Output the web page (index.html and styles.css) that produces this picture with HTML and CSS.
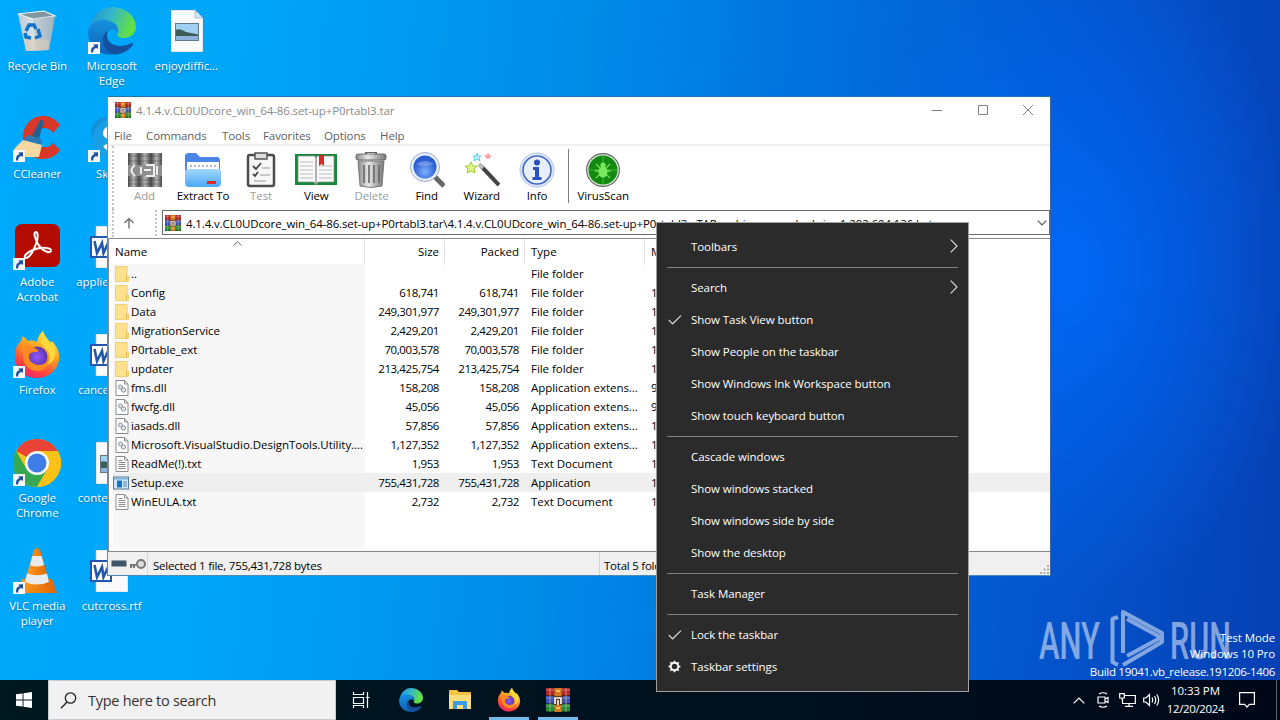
FILE: index.html
```html
<!DOCTYPE html>
<html lang="en">
<head>
    <meta charset="utf-8" />
    <title>Desktop</title>
    <link rel="stylesheet" href="styles.css">
</head>
<body>
    <!-- shared icons -->
    <svg class="sprite" width="0" height="0">
        <defs>
            <linearGradient id="g-edge" x1="0" y1="0" x2="1" y2="0.3"><stop offset="0" stop-color="#1b8fd8"/><stop offset="0.5" stop-color="#35b8c8"/><stop offset="1" stop-color="#62e045"/></linearGradient>
            <linearGradient id="g-edge2" x1="0" y1="0" x2="0" y2="1"><stop offset="0" stop-color="#1591df"/><stop offset="1" stop-color="#0d62b8"/></linearGradient>
            <linearGradient id="g-fox" x1="0.8" y1="0" x2="0.3" y2="1"><stop offset="0" stop-color="#fff14a"/><stop offset="0.45" stop-color="#ff9a1f"/><stop offset="0.8" stop-color="#ff4040"/><stop offset="1" stop-color="#e8226d"/></linearGradient>
            <radialGradient id="g-globe"><stop offset="0" stop-color="#9059ff"/><stop offset="1" stop-color="#5a35b0"/></radialGradient>
            <linearGradient id="g-folder" x1="0" y1="0" x2="0" y2="1"><stop offset="0" stop-color="#a4d8ff"/><stop offset="1" stop-color="#4aa8f6"/></linearGradient>
            <linearGradient id="g-metal" x1="0" y1="0" x2="1" y2="0"><stop offset="0" stop-color="#8a8a8a"/><stop offset="0.4" stop-color="#e8e8e8"/><stop offset="1" stop-color="#777"/></linearGradient>
            <linearGradient id="g-strap" x1="0" y1="0" x2="1" y2="0"><stop offset="0" stop-color="#4a4a4a"/><stop offset="0.5" stop-color="#b4b4b4"/><stop offset="1" stop-color="#4a4a4a"/></linearGradient>
            <radialGradient id="g-lens" cx="0.5" cy="0.7"><stop offset="0" stop-color="#7fb2ff"/><stop offset="1" stop-color="#2b5fd0"/></radialGradient>
            <linearGradient id="g-bin" x1="0" y1="0" x2="1" y2="0"><stop offset="0" stop-color="#b9c9d4"/><stop offset="0.5" stop-color="#dfe7ec"/><stop offset="1" stop-color="#8fa6b5"/></linearGradient>
            <linearGradient id="g-cone" x1="0" y1="0" x2="1" y2="0"><stop offset="0" stop-color="#ffa022"/><stop offset="1" stop-color="#e06400"/></linearGradient>
        </defs>

        <symbol id="shortcut" viewBox="0 0 12 12">
            <rect width="12" height="12" fill="#f4f6f8"/>
            <path d="M3.2 10.500C2.6 7 4 4.700 6.600 4.300L5.200 2.600 10 2.200 9.900 7 8.400 5.900C6 6.400 5 8 5.200 10.500z" fill="#1e4f9c"/>
        </symbol>

        <symbol id="edge" viewBox="0 0 48 48">
            <path d="M2 22A22.500 22.500 0 0 1 24 0C37 0 48 9 48 20C48 27 42 31 36 31C31 31 29 29 29.500 27C31 25 31 22 29 19C25 13 10 12 2 22Z" fill="url(#g-edge)"/>
            <path d="M0 24C3 13 14 11 22 14C28 16 31 21 29.500 26C28 21 20 21 18 28C15 38 24 46 31 46.500C14 51 0 41 0 24Z" fill="url(#g-edge2)"/>
            <path d="M20 24C17 31 21 38 31 39C37 39 41 37 44 36C46 36 45 38 44 39C39 45 33 47 28 47.500C18 46 12 36 16 28Q17 25 20 24Z" fill="#15509e"/>
        </symbol>

        <symbol id="firefox" viewBox="0 0 48 48">
            <path d="M7 11C9 9 9 7 9.500 5C13 7 14 9 15 10C19 9 22 10 24 11C25 7 26 3 30 0C31 5 35 8 38 12L39 10C45 16 47 23 46 29C44 40 35 47 24 47C11 47 1 37 2 24C2 18 4 14 7 11Z" fill="url(#g-fox)"/>
            <circle cx="24" cy="26" r="10.500" fill="url(#g-globe)"/>
            <path d="M7 16C12 12 21 15 26 20C23 22 18 20 16 24C15 29 19 33 25 34C31 34 35 31 35 26C38 34 31 41 23 40C14 39 9 31 10 23C8 21 7 18 7 16Z" fill="#ff8a22"/>
            <path d="M30 0C26 6 27 13 32 17C38 21 38 29 34 34C43 31 45 20 39 10L38 12C35 8 31 5 30 0Z" fill="#ffd83a"/>
        </symbol>

        <symbol id="winrar" viewBox="0 0 24 24">
            <rect x="0" y="0" width="24" height="8" fill="#b3262e"/>
            <rect x="0" y="8" width="24" height="8" fill="#3b52c4"/>
            <rect x="0" y="16" width="24" height="8" fill="#1f8a3c"/>
            <path d="M0 2h24M0 10h24M0 18h24" stroke="#fff" stroke-opacity=".35" stroke-width="1"/>
            <path d="M0 7.500h24M0 15.500h24M0 23.500h24" stroke="#111" stroke-opacity=".6" stroke-width="1"/>
            <path d="M4 0v24M20 0v24" stroke="#d8b04a" stroke-width="1" stroke-opacity=".8"/>
            <rect x="8.500" y="0" width="7" height="24" fill="#d07a22"/>
            <rect x="7.500" y="8" width="9" height="9" fill="#5a3a1c"/>
            <path d="M9 16v-6h6v6M12 12v5" fill="none" stroke="#fff" stroke-width="1.600"/>
            <path d="M10 3h4M10 20h4" stroke="#ffd75a" stroke-width="1.600"/>
        </symbol>

        <symbol id="image-file" viewBox="0 0 32 42">
            <path d="M0 0H24L32 8V42H0Z" fill="#fafafa" stroke="#b8c4cc" stroke-width=".6"/>
            <path d="M24 0V8H32Z" fill="#cfe4f4" stroke="#8fa9bb" stroke-width=".6"/>
            <rect x="4.500" y="13.500" width="23" height="17" fill="#9fd0ef" stroke="#607888"/>
            <path d="M5 20Q9 18 15 22L27 24.500V27H5Z" fill="#3d5b57"/>
            <path d="M5 26H27V30H5Z" fill="#8fb3d8"/>
        </symbol>

        <symbol id="word-file" viewBox="0 0 38 42">
            <path d="M6 0H38V42H6Z" fill="#fafafa" stroke="#b8c4cc" stroke-width=".6"/>
            <rect x="1" y="11" width="20" height="20" fill="#fff" stroke="#2356ad" stroke-width="2"/>
            <path d="M4.500 15L7 27L12 17L13.500 27L19 15" fill="none" stroke="#2356ad" stroke-width="2.600"/>
        </symbol>

        <symbol id="folder" viewBox="0 0 14 16">
            <path d="M.5.500H12V10H13.500V15.500H.5Z" fill="#ffe08c" stroke="#f0cf70"/>
            <path d="M11.500 10V15" stroke="#dfb54c"/>
        </symbol>
        <symbol id="dll" viewBox="0 0 13 16">
            <path d="M.5.500H9L12.500 4V15.500H.5Z" fill="#fff" stroke="#8c8c8c"/>
            <path d="M9 .5V4H12.500" fill="none" stroke="#8c8c8c"/>
            <circle cx="5" cy="7" r="2" fill="#dfe5ea" stroke="#8c969e"/>
            <circle cx="8" cy="10" r="2.200" fill="#dfe5ea" stroke="#8c969e"/>
        </symbol>
        <symbol id="txt" viewBox="0 0 13 16">
            <path d="M.5.500H9L12.500 4V15.500H.5Z" fill="#fff" stroke="#8c8c8c"/>
            <path d="M9 .5V4H12.500M3 4.500H7M3 6.500H10M3 8.500H10M3 10.500H10M3 12.500H10" fill="none" stroke="#8c8c8c"/>
        </symbol>
        <symbol id="exe" viewBox="0 0 16 13">
            <rect x=".5" y=".5" width="15" height="12" fill="#cfe6f6" stroke="#5d7c92"/>
            <rect x="1" y="1" width="14" height="2" fill="#7fb4dc"/>
            <rect x="4" y="4" width="5" height="7" fill="#1673cc"/>
            <path d="M10 5.500H14M10 7.500H14M10 9.500H14" stroke="#4c88b8"/>
        </symbol>
        <symbol id="arrow" viewBox="0 0 8 14">
            <path d="M.7.700L7 7L.7 13.300" fill="none" stroke="#e0e0e0" stroke-width="1.100"/>
        </symbol>
        <symbol id="check" viewBox="0 0 14 10">
            <path d="M.8 5L4.600 8.800L13 .6" fill="none" stroke="#d8d8d8" stroke-width="1.200"/>
        </symbol>
    </svg>

    <div class="desktop">
        <div class="icons">
            <div class="icon">
                <svg class="pic" viewBox="0 0 48 48">
                    <path d="M5 7L13 44L36 43L42 9L31 4Z" fill="url(#g-bin)"/>
                    <path d="M5 7L31 4L42 9L20 12Z" fill="#8196a3" stroke="#eef4f7" stroke-width="1.200"/>
                    <path d="M20 12L23 44L36 43L42 9Z" fill="#a9bac6" fill-opacity=".6"/>
                    <path d="M12 33L22 32L36 34L35 43L13 44Z" fill="#dcc8b8" fill-opacity=".6"/>
                    <path d="M13 24L16 18L21 18L23 22M25 22L27 29L22 31M18 31L13 30L12 26" fill="none" stroke="#1273c8" stroke-width="3.500"/>
                </svg>
                <span>Recycle Bin</span>
            </div>
            <div class="icon">
                <svg class="pic" viewBox="0 0 48 48">
                    <path d="M47 10C42 3 36 1 30 1C18 1 10 11 10 23C10 36 19 44 29 44C37 44 43 41 47 35L40 28C37 32 34 33 30 32C25 32 22 28 22 23C22 17 26 13 31 13C35 13 38 15 40 18Z" fill="#d8382a"/>
                    <path d="M27 5L31 6L26 24L19 21Z" fill="#23608f"/>
                    <path d="M15 20L28 24L29 30L10 26Z" fill="#2a7ab8"/>
                    <path d="M10 25L29 30L26 42L8 42L1 34Z" fill="#f5d9a0"/>
                </svg>
                <svg class="shortcut"><use href="#shortcut"/></svg>
                <span>CCleaner</span>
            </div>
            <div class="icon">
                <svg class="pic" viewBox="0 0 48 48">
                    <rect x="2" y="1" width="45" height="43" rx="7" fill="#b30b00"/>
                    <path d="M23 9C20 9 22 16 25 21C29 28 37 31 38 28C39 24 27 24 20 27C12 30 10 35 13 35C17 35 22 25 24 18C25 13 25 9 23 9Z" fill="none" stroke="#fff" stroke-width="2"/>
                </svg>
                <svg class="shortcut"><use href="#shortcut"/></svg>
                <span>Adobe Acrobat</span>
            </div>
            <div class="icon">
                <svg class="pic"><use href="#firefox"/></svg>
                <svg class="shortcut"><use href="#shortcut"/></svg>
                <span>Firefox</span>
            </div>
            <div class="icon">
                <svg class="pic" viewBox="0 0 48 48">
                    <circle cx="24" cy="24" r="24" fill="#fbc116"/>
                    <path d="M24 24L3.200 12A24 24 0 0 1 44.800 12H24Z" fill="#ea4335"/>
                    <path d="M3.200 12A24 24 0 0 0 24 48L34.400 30L24 24L13.600 30Z" fill="#34a853"/>
                    <path d="M24 12H44.800A24 24 0 0 1 24 48L34.400 30Z" fill="#fbc116"/>
                    <circle cx="24" cy="24" r="12" fill="#fff"/>
                    <circle cx="24" cy="24" r="9.500" fill="#3f7ee8"/>
                </svg>
                <svg class="shortcut"><use href="#shortcut"/></svg>
                <span>Google Chrome</span>
            </div>
            <div class="icon">
                <svg class="pic" viewBox="0 0 48 48">
                    <path d="M9 32H39L44 46H4Z" fill="url(#g-cone)"/>
                    <path d="M21 3Q24 -1 27 3L37 37Q24 43 11 37Z" fill="url(#g-cone)"/>
                    <path d="M19.300 9L28.700 9L31 18Q24 21 17 18Z" fill="#e8eaec"/>
                    <path d="M14 26.500Q24 30 34 26.500L36 35Q24 40 12 35Z" fill="#e8eaec"/>
                </svg>
                <svg class="shortcut"><use href="#shortcut"/></svg>
                <span>VLC media player</span>
            </div>
            <div class="icon">
                <svg class="pic"><use href="#edge"/></svg>
                <svg class="shortcut"><use href="#shortcut"/></svg>
                <span>Microsoft Edge</span>
            </div>
            <div class="icon">
                <svg class="pic" viewBox="0 0 48 48">
                    <circle cx="18" cy="17" r="15" fill="#1392dc"/>
                    <circle cx="25" cy="24" r="20" fill="#1a9fe6"/>
                    <path d="M31 16C26 10 16 13 17 19C18 25 31 22 31 29C30 35 20 36 17 30" fill="none" stroke="#fff" stroke-width="4"/>
                </svg>
                <svg class="shortcut"><use href="#shortcut"/></svg>
                <span>Skype</span>
            </div>
            <div class="icon">
                <svg class="pic word"><use href="#word-file"/></svg>
                <span>appliedcom...</span>
            </div>
            <div class="icon">
                <svg class="pic word"><use href="#word-file"/></svg>
                <span>cancelred.rtf</span>
            </div>
            <div class="icon">
                <svg class="pic image"><use href="#image-file"/></svg>
                <span>contentrep...</span>
            </div>
            <div class="icon">
                <svg class="pic word"><use href="#word-file"/></svg>
                <span>cutcross.rtf</span>
            </div>
            <div class="icon">
                <svg class="pic image"><use href="#image-file"/></svg>
                <span>enjoydiffic...</span>
            </div>
        </div>

        <svg class="brand" viewBox="0 0 194 60">
            <g fill="#fff" font-family="Roboto" font-size="51" font-weight="500">
                <text x="0" y="50.500" textLength="61" lengthAdjust="spacingAndGlyphs">ANY</text>
                <text x="131" y="50.500" textLength="61" lengthAdjust="spacingAndGlyphs">RUN</text>
            </g>
            <path d="M79 9L73.500 11V54L79 57M84 45V4L123 25V30L88 11M88 48L123 29M84 57L123 34V29" fill="none" stroke="#fff" stroke-width="4" stroke-linejoin="round"/>
        </svg>
        <div class="build">
            <div>Test Mode</div>
            <div>Windows 10 Pro</div>
            <div class="last">Build 19041.vb_release.191206-1406</div>
        </div>
    </div>

    <div class="window">
        <div class="titlebar">
            <svg class="app"><use href="#winrar"/></svg>
            <span class="title">4.1.4.v.CL0UDcore_win_64-86.set-up+P0rtabl3.tar</span>
            <svg class="controls" viewBox="0 0 104 12">
                <path d="M1 6.500H11M47.500 1.500H56.500V10.500H47.500ZM92 1L102 11M102 1L92 11" fill="none" stroke="#808080"/>
            </svg>
        </div>
        <div class="menubar">
            <span class="m1">File</span><span class="m2">Commands</span><span class="m3">Tools</span><span class="m4">Favorites</span><span class="m5">Options</span><span class="m6">Help</span>
        </div>
        <div class="toolbar">
            <div class="tool add off">
                <svg viewBox="0 0 36 36">
                    <rect x="1" y="1" width="11" height="34" fill="url(#g-strap)"/>
                    <rect x="12" y="1" width="12" height="34" fill="url(#g-strap)"/>
                    <rect x="24" y="1" width="11" height="34" fill="url(#g-strap)"/>
                    <path d="M1 4H35M1 9H35M1 28H35M1 32H35" stroke="#333" stroke-opacity=".35"/>
                    <rect x="1" y="13" width="34" height="11" fill="#8e8e8e"/>
                    <path d="M8 13Q1 18 8 24M14 15V22M17 18H24M19 13H27V24H19M30 14V23" fill="none" stroke="#eee" stroke-width="2"/>
                </svg>
                <span>Add</span>
            </div>
            <div class="tool extract">
                <svg viewBox="0 0 36 36">
                    <path d="M0 4Q0 1 4 1H11L15 5H32Q35 5 35 9V30H0Z" fill="#4a86ea"/>
                    <rect x="2" y="10" width="32" height="14" fill="#fff"/>
                    <path d="M5 14H31" stroke="#b0b8c4" stroke-width="2" stroke-dasharray="2 2"/>
                    <path d="M0 20Q0 17 4 17H32Q36 17 36 20V31Q36 35 32 35H4Q0 35 0 31Z" fill="url(#g-folder)"/>
                    <rect x="22" y="29" width="9" height="3" fill="#e02828"/>
                </svg>
                <span>Extract To</span>
            </div>
            <div class="tool off">
                <svg viewBox="0 0 36 36">
                    <rect x="5" y="3" width="26" height="31" rx="2" fill="#f6f6f6" stroke="#4c4c4c" stroke-width="2.500"/>
                    <path d="M12 1H24V7H12Z" fill="#ddd" stroke="#555" stroke-width="1.500"/>
                    <path d="M10 14L13 17L18 11M10 22L12 24L15 20" fill="none" stroke="#444" stroke-width="1.800"/>
                    <path d="M19 16H27M17 23H27M11 29H23" stroke="#999" stroke-width="1.200"/>
                </svg>
                <span>Test</span>
            </div>
            <div class="tool">
                <svg class="wide" viewBox="0 0 42 36">
                    <rect x="0" y="2" width="42" height="31" fill="#168a38"/>
                    <path d="M3 4H20L21 6L22 4H39V30H23L21 33L19 30H3Z" fill="#fafafa" stroke="#8a8a8a" stroke-width=".7"/>
                    <path d="M5 10H18M5 14H18M5 18H18M5 22H18M5 26H18M24 14H37M24 18H37M24 22H37M24 26H37" stroke="#bbb"/>
                    <path d="M21 5V32" stroke="#666"/>
                    <path d="M24 3H29V14L26.500 12L24 14Z" fill="#d52b2b"/>
                </svg>
                <span>View</span>
            </div>
            <div class="tool off">
                <svg viewBox="0 0 36 36">
                    <path d="M13 3V0H23V3" fill="none" stroke="#666" stroke-width="2"/>
                    <rect x="3" y="2" width="30" height="6" rx="2" fill="url(#g-metal)" stroke="#555" stroke-width=".8"/>
                    <path d="M5 9H31L29 34Q18 37 7 34Z" fill="url(#g-metal)" stroke="#666" stroke-width=".8"/>
                    <path d="M11 13V31M16 13V31M21 13V31M26 13V31" stroke="#666" stroke-width="1.600"/>
                </svg>
                <span>Delete</span>
            </div>
            <div class="tool">
                <svg viewBox="0 0 36 36">
                    <path d="M26 25L35 34" stroke="#666" stroke-width="5"/>
                    <circle cx="16" cy="15" r="14.500" fill="#e8eef8" stroke="#9caecb"/>
                    <circle cx="16" cy="15" r="11.500" fill="url(#g-lens)"/>
                    <path d="M7 12Q16 6 25 12Q16 16 7 12Z" fill="#fff" fill-opacity=".25"/>
                </svg>
                <span>Find</span>
            </div>
            <div class="tool">
                <svg viewBox="0 0 36 36">
                    <path d="M17 14L35 33" stroke="#444" stroke-width="4"/>
                    <path d="M15 12L19 16" stroke="#bbb" stroke-width="4"/>
                    <path d="M7 10L9 14L13 14L10 17L11 21L7 19L3 21L4 17L1 14L5 14Z" fill="#dff58a" stroke="#9ccc2c"/>
                    <path d="M13 1L14 4L17 4L15 6L16 9L13 7L10 9L11 6L9 4L12 4Z" fill="#c4f1ff" stroke="#60cdea"/>
                    <path d="M24 0L25 3L28 3L26 5L26 7L24 6L22 7L22 5L20 3L23 3Z" fill="#ff9c9c"/>
                </svg>
                <span>Wizard</span>
            </div>
            <div class="tool">
                <svg viewBox="0 0 36 36">
                    <circle cx="18" cy="18" r="17" fill="#dbe6fa" stroke="#b5c6e8"/>
                    <circle cx="18" cy="18" r="14" fill="#e8eefa" stroke="#4468c4" stroke-width="1.600"/>
                    <circle cx="18" cy="10.500" r="3" fill="#2c50c4"/>
                    <path d="M14 15H20V25H22.500V28H13.500V25H16V18H14Z" fill="#2c50c4"/>
                </svg>
                <span>Info</span>
            </div>
            <div class="divider"></div>
            <div class="tool">
                <svg viewBox="0 0 36 36">
                    <circle cx="18" cy="18" r="17" fill="#666"/>
                    <circle cx="18" cy="18" r="15.800" fill="#d4e8d0"/>
                    <circle cx="18" cy="18" r="14.500" fill="#128a12"/>
                    <path d="M18 4V32M4 18H32" stroke="#3fb630"/>
                    <path d="M11 12L25 26M25 12L11 26M10 19H26" stroke="#6fe052" stroke-width="1.300"/>
                    <ellipse cx="18" cy="20" rx="4.500" ry="5.500" fill="#7be85c"/>
                    <circle cx="18" cy="13" r="2.600" fill="#7be85c"/>
                </svg>
                <span>VirusScan</span>
            </div>
        </div>
        <div class="addressbar">
            <svg class="up" viewBox="0 0 12 12"><path d="M6 11.500V1.500M1.500 6L6 1.500L10.500 6" fill="none" stroke="#777" stroke-width="1.500"/></svg>
            <div class="grip"></div>
            <div class="address">
                <svg class="app"><use href="#winrar"/></svg>
                <span>4.1.4.v.CL0UDcore_win_64-86.set-up+P0rtabl3.tar\4.1.4.v.CL0UDcore_win_64-86.set-up+P0rtabl3 - TAR archive, unpacked size 1,292,604,136 bytes</span>
                <svg class="drop" viewBox="0 0 10 6"><path d="M.7.700L5 5L9.300.7" fill="none" stroke="#555" stroke-width="1.200"/></svg>
            </div>
        </div>
        <div class="list">
            <div class="row head">
                <span class="name">Name</span><span class="num">Size</span><span class="num">Packed</span><span class="type">Type</span><span class="date">Modified</span>
                <svg class="sort" viewBox="0 0 9 5"><path d="M.5 4.500L4.500.7L8.500 4.500" fill="none" stroke="#666"/></svg>
            </div>
            <div class="row"><span class="name"><svg class="fi"><use href="#folder"/></svg>..</span><span class="num"></span><span class="num"></span><span class="type">File folder</span><span class="date"></span></div>
            <div class="row"><span class="name"><svg class="fi"><use href="#folder"/></svg>Config</span><span class="num">618,741</span><span class="num">618,741</span><span class="type">File folder</span><span class="date">12/20/2024</span></div>
            <div class="row"><span class="name"><svg class="fi"><use href="#folder"/></svg>Data</span><span class="num">249,301,977</span><span class="num">249,301,977</span><span class="type">File folder</span><span class="date">12/20/2024</span></div>
            <div class="row"><span class="name"><svg class="fi"><use href="#folder"/></svg>MigrationService</span><span class="num">2,429,201</span><span class="num">2,429,201</span><span class="type">File folder</span><span class="date">12/20/2024</span></div>
            <div class="row"><span class="name"><svg class="fi"><use href="#folder"/></svg>P0rtable_ext</span><span class="num">70,003,578</span><span class="num">70,003,578</span><span class="type">File folder</span><span class="date">12/20/2024</span></div>
            <div class="row"><span class="name"><svg class="fi"><use href="#folder"/></svg>updater</span><span class="num">213,425,754</span><span class="num">213,425,754</span><span class="type">File folder</span><span class="date">12/20/2024</span></div>
            <div class="row"><span class="name"><svg class="fi"><use href="#dll"/></svg>fms.dll</span><span class="num">158,208</span><span class="num">158,208</span><span class="type">Application extens...</span><span class="date">9/15/2024</span></div>
            <div class="row"><span class="name"><svg class="fi"><use href="#dll"/></svg>fwcfg.dll</span><span class="num">45,056</span><span class="num">45,056</span><span class="type">Application extens...</span><span class="date">9/15/2024</span></div>
            <div class="row"><span class="name"><svg class="fi"><use href="#dll"/></svg>iasads.dll</span><span class="num">57,856</span><span class="num">57,856</span><span class="type">Application extens...</span><span class="date">12/7/2024</span></div>
            <div class="row"><span class="name"><svg class="fi"><use href="#dll"/></svg>Microsoft.VisualStudio.DesignTools.Utility....</span><span class="num">1,127,352</span><span class="num">1,127,352</span><span class="type">Application extens...</span><span class="date">12/7/2024</span></div>
            <div class="row"><span class="name"><svg class="fi"><use href="#txt"/></svg>ReadMe(!).txt</span><span class="num">1,953</span><span class="num">1,953</span><span class="type">Text Document</span><span class="date">12/20/2024</span></div>
            <div class="row selected"><span class="name"><svg class="fi exe"><use href="#exe"/></svg>Setup.exe</span><span class="num">755,431,728</span><span class="num">755,431,728</span><span class="type">Application</span><span class="date">12/20/2024</span></div>
            <div class="row"><span class="name"><svg class="fi"><use href="#txt"/></svg>WinEULA.txt</span><span class="num">2,732</span><span class="num">2,732</span><span class="type">Text Document</span><span class="date">12/20/2024</span></div>
            <div class="row rest"><span class="name"></span></div>
        </div>
        <div class="statusbar">
            <svg class="keys" viewBox="0 0 36 12">
                <rect x=".5" y="2.500" width="15" height="6" rx="1" fill="#3f5568" stroke="#8fa0ac"/>
                <path d="M19 7H29M20 7V10M23 7V10" stroke="#777" stroke-width="2"/>
                <circle cx="30" cy="6" r="4" fill="#ddd" stroke="#777" stroke-width="2"/>
            </svg>
            <span class="left">Selected 1 file, 755,431,728 bytes</span>
            <span class="right">Total 5 folders, 7 files, 756,824,885 bytes</span>
            <svg class="resize" viewBox="0 0 9 9"><path d="M7 0h2v2H7zM7 3.500h2v2H7zM7 7h2v2H7zM3.500 3.500h2v2h-2zM3.500 7h2v2h-2zM0 7h2v2H0z" fill="#aaa"/></svg>
        </div>
    </div>

    <div class="context-menu">
        <div class="item"><span>Toolbars</span><svg class="arrow"><use href="#arrow"/></svg></div>
        <hr>
        <div class="item"><span>Search</span><svg class="arrow"><use href="#arrow"/></svg></div>
        <div class="item"><svg class="check"><use href="#check"/></svg><span>Show Task View button</span></div>
        <div class="item"><span>Show People on the taskbar</span></div>
        <div class="item"><span>Show Windows Ink Workspace button</span></div>
        <div class="item"><span>Show touch keyboard button</span></div>
        <hr>
        <div class="item"><span>Cascade windows</span></div>
        <div class="item"><span>Show windows stacked</span></div>
        <div class="item"><span>Show windows side by side</span></div>
        <div class="item"><span>Show the desktop</span></div>
        <hr>
        <div class="item"><span>Task Manager</span></div>
        <hr>
        <div class="item"><svg class="check"><use href="#check"/></svg><span>Lock the taskbar</span></div>
        <div class="item">
            <svg class="gear" viewBox="0 0 14 14">
                <circle cx="7" cy="7" r="4" fill="none" stroke="#fff" stroke-width="2"/>
                <path d="M7 .7V3M7 11V13.300M.7 7H3M11 7H13.300M2.500 2.500L4.200 4.200M9.800 9.800L11.500 11.500M11.500 2.500L9.800 4.200M4.200 9.800L2.500 11.500" stroke="#fff" stroke-width="2"/>
            </svg>
            <span>Taskbar settings</span>
        </div>
    </div>

    <div class="taskbar">
        <div class="start">
            <svg viewBox="0 0 16 16"><path d="M0 2.300L6.600 1.400V7.500H0ZM7.500 1.200L16 0V7.500H7.500ZM0 8.500H6.600V14.600L0 13.700ZM7.500 8.500H16V16L7.500 14.800Z" fill="#fff"/></svg>
        </div>
        <div class="search">
            <svg viewBox="0 0 17 17"><circle cx="10.500" cy="6" r="5.200" fill="none" stroke="#222" stroke-width="1.300"/><path d="M7 10L1 16.300" stroke="#222" stroke-width="1.300"/></svg>
            <span>Type here to search</span>
        </div>
        <div class="task">
            <svg class="view" viewBox="0 0 18 16"><path d="M1.500 0V2.500H11.500V0M1.500 5.500H11.500V11.500H1.500ZM1.500 16V13.500H11.500V16M15.500 0V16M14 5.500H17.500" fill="none" stroke="#fff" stroke-width="1.200"/></svg>
        </div>
        <div class="task gap"><svg><use href="#edge"/></svg></div>
        <div class="task">
            <svg class="explorer" viewBox="0 0 22 20">
                <path d="M0 1Q0 0 1 0H8L10 2H21Q22 2 22 3V19H0Z" fill="#f5c242"/>
                <path d="M0 5H22V19H0Z" fill="#ffdd7a"/>
                <path d="M4 19V12Q4 11 5 11H17Q18 11 18 12V19H14V15H8V19Z" fill="#3b9be8"/>
            </svg>
        </div>
        <div class="task open"><svg><use href="#firefox"/></svg></div>
        <div class="task open"><svg><use href="#winrar"/></svg></div>
        <div class="tray">
            <svg class="chev" viewBox="0 0 12 7"><path d="M.7 6.300L6 1L11.300 6.300" fill="none" stroke="#fff" stroke-width="1.200"/></svg>
            <svg class="cam" viewBox="0 0 12 16"><path d="M1 5H8V11H1ZM8 7L11 5.500V10.500L8 9M2 2Q6 -.5 10 2M2 14Q6 16.500 10 14" fill="none" stroke="#fff" stroke-width="1.200"/></svg>
            <svg class="net" viewBox="0 0 17 14"><path d="M5 2.500H16.300V10.500H3.500V6M.7.700H5.300V5H.7ZM3 5V7M10 10.500V13M6 13.300H14" fill="none" stroke="#fff" stroke-width="1.200"/></svg>
            <svg class="vol" viewBox="0 0 17 14"><path d="M.7 5H3L6.500 1.500V12.500L3 9H.7ZM9 4.500Q10.500 7 9 9.500M11.500 3Q14 7 11.500 11M13.800 1.500Q17.500 7 13.800 12.500" fill="none" stroke="#fff" stroke-width="1.200"/></svg>
            <div class="clock"><div>10:33 PM</div><div class="day">12/20/2024</div></div>
            <svg class="note" viewBox="0 0 16 16"><path d="M.6.700H15.400V12.300H10.500L8 15L5.500 12.300H.6Z" fill="none" stroke="#fff" stroke-width="1.200"/></svg>
            <div class="peek"></div>
        </div>
    </div>
</body>
</html>
```
FILE: styles.css
```css
* {
    box-sizing: border-box;
}

body {
    margin: 0;
    width: 1280px;
    height: 720px;
    overflow: hidden;
    position: relative;
    display: flex;
    flex-direction: column;
    font-family: "Open Sans", "Noto Sans", sans-serif;
    font-size: 11.5px;
    color: #000;
}

svg {
    display: block;
    flex: none;
}

.sprite {
    position: absolute;
}

/* wallpaper */
.desktop {
    flex: 1;
    position: relative;
    background:
        radial-gradient(ellipse 240px 330px at 1070px 270px, rgba(0, 108, 255, 0.8), rgba(0, 100, 255, 0) 100%),
        linear-gradient(95deg, #00a9fc 0%, #00a6f8 18%, #008eea 42%, #0070dc 62%, #0454cc 82%, #0640b4 100%);
}

.icons {
    display: grid;
    grid-auto-flow: column;
    grid-template-rows: repeat(6, 108px);
    grid-auto-columns: 74.5px;
    padding-top: 7px;
    width: max-content;
}

.icon {
    position: relative;
    display: flex;
    flex-direction: column;
    align-items: center;
    color: #fff;
    line-height: 15px;
    text-align: center;
}

.icon span {
    max-width: 72px;
    margin-top: 3px;
    text-shadow: 0 1px 2px rgba(0, 0, 0, 0.4);
    letter-spacing: -0.05px;
}

.pic {
    width: 48px;
    height: 48px;
}

.pic.image {
    width: 32px;
    height: 42px;
    margin: 3px 0 3px 1px;
}

.pic.word {
    width: 38px;
    height: 42px;
    margin: 3px 5px 3px 0;
}

.shortcut {
    position: absolute;
    left: 13px;
    top: 35px;
    width: 12px;
    height: 12px;
}

.brand {
    position: absolute;
    left: 1039px;
    top: 608px;
    width: 194px;
    height: 60px;
    opacity: 0.5;
}

.build {
    position: absolute;
    right: 5px;
    bottom: -1px;
    color: #fff;
    text-align: right;
    line-height: 16px;
    letter-spacing: -0.1px;
}

.build .last {
    line-height: 19px;
    letter-spacing: -0.3px;
}

/* archive window */
.window {
    position: absolute;
    left: 107px;
    top: 96px;
    width: 944px;
    height: 480px;
    background: #fff;
    border: 1px solid #6d8a9c;
    border-top-color: #1d76b4;
    border-right-color: #3a62a8;
    border-bottom-color: #4c8cb8;
    display: flex;
    flex-direction: column;
}

.app {
    width: 16px;
    height: 16px;
}

.titlebar {
    display: flex;
    align-items: center;
    height: 28px;
    padding: 0 15px 2px 7px;
    color: #8a8a8a;
}

.title {
    margin-left: 5px;
    flex: 1;
    letter-spacing: -0.11px;
}

.controls {
    width: 104px;
    height: 12px;
}

.menubar {
    display: flex;
    height: 21px;
    padding-left: 6px;
    line-height: 21px;
    color: #606060;
    letter-spacing: -0.1px;
    border-bottom: 2px solid #efefef;
}

.m1 { width: 32px; }
.m2 { width: 76px; }
.m3 { width: 41px; }
.m4 { width: 61px; }
.m5 { width: 56px; }

.toolbar {
    display: flex;
    height: 63px;
    padding: 6px 0 0 2.5px;
    margin-left: 4px;
    border-left: 2px dotted #c4c4c4;
}

.tool {
    width: 55.2px;
    display: flex;
    flex-direction: column;
    align-items: center;
    line-height: 17px;
    white-space: nowrap;
    letter-spacing: -0.1px;
}

.tool.add {
    width: 56px;
}

.tool.extract {
    width: 61px;
}

.tool svg {
    width: 36px;
    height: 36px;
    margin-bottom: -1px;
}

.tool svg.wide {
    width: 42px;
}

.tool.off {
    color: #9b9b9b;
}

.divider {
    width: 1px;
    height: 54px;
    margin: -3px 7px 0 3px;
    background: #808080;
}

.addressbar {
    display: flex;
    align-items: center;
    height: 28px;
    margin-left: 4px;
    border-left: 2px dotted #c4c4c4;
    padding-bottom: 1px;
}

.up {
    width: 12px;
    height: 12px;
    margin-left: 9px;
}

.grip {
    height: 26px;
    margin: 0 5px 0 20px;
    border-left: 2px dotted #c4c4c4;
}

.address {
    flex: 1;
    display: flex;
    align-items: center;
    height: 25px;
    border: 1px solid #6a6a6a;
    padding: 0 3px 0 2px;
    white-space: nowrap;
}

.address span {
    flex: 1;
    margin-left: 5px;
    padding-top: 1px;
    letter-spacing: -0.13px;
}

.drop {
    width: 10px;
    height: 6px;
    margin-right: -1px;
}

.list {
    flex: 1;
    border: 1px solid #828790;
    border-width: 1px 0 1px 1px;
    padding-left: 4px;
    display: flex;
    flex-direction: column;
    overflow: hidden;
    margin-top: 1px;
}

.row {
    position: relative;
    display: grid;
    grid-template-columns: 252px 80px 80px 120px 1fr;
    height: 19px;
    line-height: 19px;
    white-space: nowrap;
    letter-spacing: -0.04px;
}

.row .name {
    display: flex;
    align-items: center;
    background: #f7f7f7;
    padding-left: 2px;
}

.row .num {
    text-align: right;
    padding-right: 6px;
    letter-spacing: -0.4px;
}

.row .type,
.row .date {
    padding-left: 6px;
}

.row.selected,
.row.selected .name {
    background: #efefef;
}

.row.head {
    height: 25px;
    line-height: 26px;
}

.row.head span {
    background: #fff;
    border-right: 1px solid #e5e5e5;
    letter-spacing: 0;
}

.row.head .num {
    padding-right: 5px;
}

.row.head .date {
    border-right: 0;
}

.sort {
    position: absolute;
    left: 120px;
    top: 2px;
    width: 9px;
    height: 5px;
}

.row.rest {
    flex: 1;
    margin-bottom: 3px;
}

.fi {
    width: 14px;
    height: 16px;
    margin: 0 2px 0 0;
}

.fi.exe {
    width: 16px;
    margin: 0 2px 0 -2px;
}

.statusbar {
    display: flex;
    height: 23px;
    background: #f0f0f0;
    line-height: 27px;
    white-space: nowrap;
    letter-spacing: -0.24px;
}

.keys {
    width: 36px;
    height: 12px;
    margin: 6px 4px 0 3px;
}

.statusbar .left {
    width: 449px;
    border-left: 1px solid #d8d8d8;
    padding-left: 5px;
    margin-left: -4px;
}

.statusbar .right {
    border-left: 1px solid #d0d0d0;
    padding-left: 4px;
    flex: 1;
    margin-left: 3px;
}

.resize {
    width: 9px;
    height: 9px;
    margin: 13px 1px 0 0;
}

/* taskbar context menu */
.context-menu {
    position: absolute;
    z-index: 2;
    left: 656px;
    top: 222px;
    width: 313px;
    height: 470px;
    padding: 8px 0;
    background: #2b2b2b;
    border: 1px solid #a0a0a0;
    color: #fff;
    letter-spacing: -0.07px;
}

.context-menu hr {
    height: 1px;
    margin: 4px 10px;
    border: 0;
    background: #808080;
}

.item {
    display: flex;
    align-items: center;
    height: 32px;
    padding: 0 10px 2px 34px;
    font-weight: 500;
}

.item span {
    flex: 1;
}

.arrow {
    width: 8px;
    height: 14px;
}

.check {
    width: 14px;
    height: 10px;
    margin: 1px 9px 0 -23px;
}

.gear {
    width: 13px;
    height: 13px;
    margin: 1px 10px 0 -23px;
}

/* taskbar */
.taskbar {
    display: flex;
    height: 40px;
    background: linear-gradient(90deg, #001820, #00101e 60%, #000818);
    color: #fff;
}

.start {
    width: 48px;
    display: flex;
    align-items: center;
    justify-content: center;
}

.start svg {
    width: 16px;
    height: 16px;
}

.search {
    width: 288px;
    display: flex;
    align-items: center;
    background: #f1f1f1;
    border: 1px solid #c6cbcd;
    color: #333;
    font-size: 14.5px;
    letter-spacing: -0.28px;
    padding-left: 11px;
}

.search svg {
    width: 17px;
    height: 17px;
    margin-right: 11px;
}

.task {
    width: 49px;
    display: flex;
    align-items: center;
    justify-content: center;
}

.task.gap {
    margin-left: 1px;
}

.task svg {
    width: 24px;
    height: 24px;
}

.task svg.view {
    width: 18px;
    height: 16px;
}

.task svg.explorer {
    width: 22px;
    height: 20px;
}

.task.open {
    background: linear-gradient(#76b9ed, #76b9ed) center bottom / 40px 3px no-repeat;
}

.tray {
    margin-left: auto;
    display: flex;
    align-items: center;
}

.chev {
    width: 12px;
    height: 7px;
    margin-right: 12px;
}

.cam {
    width: 12px;
    height: 16px;
    margin-right: 10px;
}

.net {
    width: 17px;
    height: 14px;
    margin-right: 7px;
}

.vol {
    width: 17px;
    height: 14px;
}

.clock {
    width: 71px;
    text-align: center;
    line-height: 18px;
    white-space: nowrap;
    letter-spacing: -0.1px;
}

.clock .day {
    letter-spacing: -0.35px;
}

.note {
    width: 16px;
    height: 16px;
    margin: 0 21px 0 8px;
}

.peek {
    width: 4px;
    height: 40px;
    border-left: 1px solid #5a626c;
}
```
